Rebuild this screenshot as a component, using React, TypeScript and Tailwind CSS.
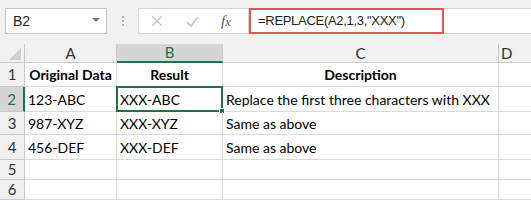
import React from 'react'

const cellFont = { fontFamily: 'Lato, "Open Sans", sans-serif' }

const rows = [
  { n: '1', a: 'Original Data', b: 'Result', c: 'Description', head: true, h: 'h-[24px]' },
  { n: '2', a: '123-ABC', b: 'XXX-ABC', c: 'Replace the first three characters with XXX', h: 'h-[25px]' },
  { n: '3', a: '987-XYZ', b: 'XXX-XYZ', c: 'Same as above', h: 'h-[23px]' },
  { n: '4', a: '456-DEF', b: 'XXX-DEF', c: 'Same as above', h: 'h-[25px]' },
  { n: '5', a: '', b: '', c: '', h: 'h-[20px]' },
  { n: '6', a: '', b: '', c: '', h: 'h-[20px]' },
]

function FormulaBar() {
  return (
    <div className="h-[44px] bg-[#f1f1f1] pt-[8px] font-['Liberation_Sans',sans-serif]">
      <div className="flex h-[26px] items-stretch">
        <div className="ml-[5px] flex w-[102px] items-center justify-between border border-[#c6c6c6] bg-white pl-[7px] pr-[6px] text-[14px] text-[#222]">
          <span>B2</span>
          <span className="mb-[2px] h-0 w-0 border-x-[4px] border-t-[4px] border-x-transparent border-t-[#777]" />
        </div>
        <div className="flex w-[31px] flex-col items-center justify-center gap-[2px]">
          <span className="h-[2px] w-[2px] bg-[#b0b0b0]" />
          <span className="h-[2px] w-[2px] bg-[#b0b0b0]" />
          <span className="h-[2px] w-[2px] bg-[#b0b0b0]" />
        </div>
        <div className="flex w-[111px] items-center border border-[#d6d6d6] bg-white">
          <svg className="ml-[12px]" width="12" height="12" viewBox="0 0 12 12">
            <path d="M1 1 L11 11 M11 1 L1 11" stroke="#c4c4c4" strokeWidth="1.4" fill="none" />
          </svg>
          <svg className="ml-[23px]" width="13" height="11" viewBox="0 0 13 11">
            <path d="M1 6 L5 10 L12 1" stroke="#c4c4c4" strokeWidth="1.6" fill="none" />
          </svg>
          <span className="ml-[22px] font-['Liberation_Serif',serif] text-[15px] italic text-[#555]">
            f<span className="text-[12px]">x</span>
          </span>
        </div>
        <div className="flex flex-1 items-stretch border-y border-[#d6d6d6] bg-white">
          <div className="-my-px flex w-[195px] items-center border-2 border-[#e25555] pl-[7px] text-[13px] tracking-[-0.3px] text-[#222]">
            =REPLACE(A2,1,3,"XXX")
          </div>
        </div>
      </div>
    </div>
  )
}

export default function App() {
  return (
    <div className="h-[200px] w-[531px] overflow-hidden bg-white">
      <FormulaBar />
      <div className="grid grid-cols-[25px_92px_106px_276px_1fr] text-[14px] text-black" style={cellFont}>
        <div className="relative h-[19px] border-b border-r border-[#c8c8c8] bg-[#f1f1f1]">
          <span className="absolute bottom-[2px] right-[3px] h-0 w-0 border-b-[12px] border-l-[12px] border-b-[#d0d0d0] border-l-transparent" />
        </div>
        <div className="flex h-[19px] items-center justify-center border-b border-r border-[#c8c8c8] bg-[#f1f1f1] text-[15px] text-[#333]">A</div>
        <div className="flex h-[19px] items-center justify-center border-b-2 border-r border-b-[#217346] border-r-[#c8c8c8] bg-[#d6d6d6] text-[15px] text-[#217346]">B</div>
        <div className="flex h-[19px] items-center justify-center border-b border-r border-[#c8c8c8] bg-[#f1f1f1] text-[15px] text-[#333]">C</div>
        <div className="flex h-[19px] items-center justify-start border-b border-[#c8c8c8] bg-[#f1f1f1] pl-[2px] text-[15px] text-[#333]">D</div>
        {rows.map((r) => {
          const sel = r.n === '2'
          return (
            <React.Fragment key={r.n}>
              <div
                className={
                  sel
                    ? `flex ${r.h} items-center justify-center border-b border-r-2 border-b-[#c8c8c8] border-r-[#217346] bg-[#d6d6d6] text-[15px] text-[#217346]`
                    : `flex ${r.h} items-center justify-center border-b border-r border-[#c8c8c8] bg-[#f1f1f1] text-[15px] text-[#333]`
                }
              >
                {r.n}
              </div>
              <div className={`flex ${r.h} items-center border-b border-r border-[#dadada] ${r.head ? 'justify-center font-bold' : 'pl-[3px]'}`}>
                {r.a}
              </div>
              <div className={`relative flex ${r.h} items-center border-b border-r border-[#dadada] ${r.head ? 'justify-center font-bold' : 'pl-[3px]'}`}>
                {r.b}
                {sel && (
                  <>
                    <span className="absolute -left-px -top-px bottom-[-1px] right-[-1px] border-2 border-[#217346]" />
                    <span className="absolute bottom-[-3px] right-[-3px] h-[6px] w-[6px] border border-white bg-[#217346]" />
                  </>
                )}
              </div>
              <div className={`flex ${r.h} items-center whitespace-nowrap border-b border-r border-[#dadada] ${r.head ? 'justify-center font-bold' : 'pl-[3px]'}`}>
                {r.c}
              </div>
              <div className={`${r.h} border-b border-[#dadada]`} />
            </React.Fragment>
          )
        })}
      </div>
    </div>
  )
}
